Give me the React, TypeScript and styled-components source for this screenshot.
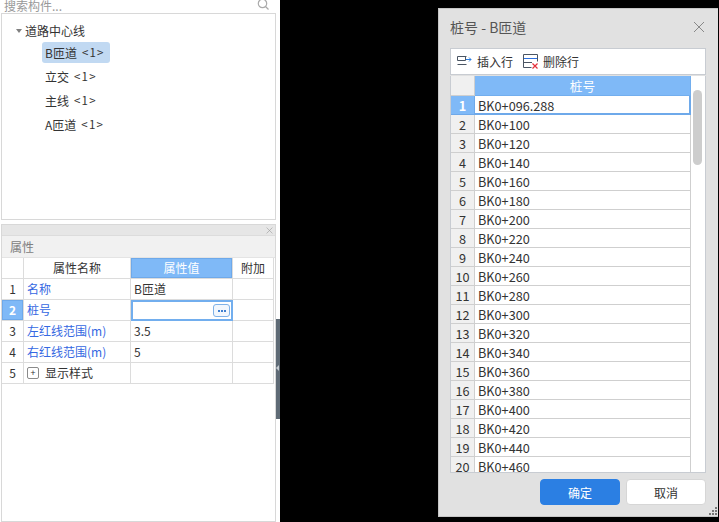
import React from 'react';
import styled, { createGlobalStyle } from 'styled-components';

const FONT = `"Noto Sans CJK SC", "Noto Sans", sans-serif`;

const GlobalStyle = createGlobalStyle`
  html, body {
    margin: 0;
    padding: 0;
    background: #000;
  }
`;

const Screen = styled.div`
  position: relative;
  width: 719px;
  height: 522px;
  overflow: hidden;
  background: #000;
  font-family: ${FONT};
  font-size: 12px;
  color: #333;
`;

const Sidebar = styled.aside`
  width: 280px;
  height: 522px;
  background: #fff;
  display: flex;
  flex-direction: column;
  box-sizing: border-box;
  padding: 0 4px 0 1px;
  position: relative;
`;

const SearchBar = styled.div`
  height: 13px;
  display: flex;
  justify-content: space-between;
  overflow: hidden;
  background: #fff;
  color: #999;
  padding: 0 7px 0 3px;
  box-sizing: border-box;

  span {
    line-height: 11px;
  }
`;

const TreePanel = styled.div`
  height: 207px;
  box-sizing: border-box;
  background: #fff;
  border: 1px solid #d8d8d8;
  padding: 4px 0 0 14px;
  display: flex;
  flex-direction: column;
  align-items: flex-start;
`;

const RootNode = styled.div`
  height: 24px;
  display: flex;
  align-items: center;
  gap: 3px;
  font-size: 12px;
`;

const Caret = styled.span`
  width: 0;
  height: 0;
  border-left: 3.5px solid transparent;
  border-right: 3.5px solid transparent;
  border-top: 4px solid #808080;
  margin-top: 1px;
`;

const Leaf = styled.div<{ $selected?: boolean }>`
  height: 21px;
  margin: 0 0 3px 26px;
  padding: 0 5px 1px 3px;
  box-sizing: border-box;
  display: flex;
  align-items: center;
  gap: 5px;
  border-radius: 3px;
  background: ${(p) => (p.$selected ? '#c1d9f2' : 'transparent')};
`;

const Count = styled.span`
  font-size: 11.5px;
  letter-spacing: 1.2px;
`;

const PropsPanel = styled.section`
  margin-top: 4px;
  flex: 1;
  background: #fff;
  border: 1px solid #d8d8d8;
  display: flex;
  flex-direction: column;
`;

const PanelStrip = styled.div`
  height: 10px;
  background: #e6e6e6;
  display: flex;
  justify-content: flex-end;
  align-items: center;
  padding-right: 2px;
`;

const PanelTitle = styled.div`
  height: 21px;
  background: #f1f1f1;
  border-top: 1px solid #dcdcdc;
  display: flex;
  align-items: center;
  padding-left: 8px;
  color: #808080;
`;

const PropGrid = styled.div`
  display: grid;
  grid-template-columns: 22px 107px 102px 41px;
  grid-auto-rows: 21px;
  width: 273px;
  box-sizing: border-box;
  border-top: 1px solid #e4e4e4;
`;

const Cell = styled.div<{ $head?: boolean; $active?: boolean; $blue?: boolean; $center?: boolean }>`
  box-sizing: border-box;
  display: flex;
  align-items: center;
  justify-content: ${(p) => (p.$head || p.$center ? 'center' : 'flex-start')};
  padding: ${(p) => (p.$head || p.$center ? '0 0 2px' : '0 3px 2px')};
  border-right: 1px solid #dcdcdc;
  border-bottom: 1px solid #dcdcdc;
  background: ${(p) => (p.$active ? '#7fb9f7' : '#fff')};
  color: ${(p) => (p.$active ? '#fff' : p.$blue ? '#3568e2' : '#333')};
  font-weight: ${(p) => (p.$active && !p.$head ? 700 : 400)};
  white-space: nowrap;
  overflow: hidden;
  ${(p) => (p.$active ? 'box-shadow: inset 0 0 0 1px #6ea9ea;' : '')}
`;

const EditCell = styled.div`
  box-sizing: border-box;
  border: 2px solid #72aeee;
  background: #fff;
  display: flex;
  align-items: center;
  justify-content: flex-end;
  padding-right: 1px;
`;

const MoreButton = styled.span`
  width: 17px;
  height: 13px;
  box-sizing: border-box;
  border: 1px solid #7fb2e8;
  border-radius: 3px;
  display: flex;
  align-items: center;
  justify-content: center;
  gap: 1px;
  background: #f2f7fd;

  i {
    width: 2px;
    height: 2px;
    background: #3f7fd0;
  }
`;

const PlusBox = styled.span`
  width: 12px;
  height: 12px;
  box-sizing: border-box;
  border: 1px solid #8a8a8a;
  border-radius: 2px;
  display: inline-flex;
  align-items: center;
  justify-content: center;
  font-size: 9px;
  line-height: 1;
  margin: 1px 6px 0 0;
`;

const Splitter = styled.div`
  position: absolute;
  left: 276px;
  top: 319px;
  width: 4px;
  height: 100px;
  background: #5f6b76;

  &::after {
    content: '';
    position: absolute;
    left: 0;
    top: 46px;
    border-right: 3px solid #c6ccd2;
    border-top: 3px solid transparent;
    border-bottom: 3px solid transparent;
  }
`;

const Dialog = styled.div`
  position: absolute;
  left: 438px;
  top: 8px;
  width: 280px;
  height: 509px;
  box-sizing: border-box;
  background: #e1e1e1;
  border: 1px solid #c6c6c6;
  border-right: 0;
  padding: 0 12px 0 11px;
  display: flex;
  flex-direction: column;
`;

const DialogHeader = styled.header`
  height: 39px;
  display: flex;
  align-items: center;
  justify-content: space-between;
  font-size: 14px;
  color: #555;
  padding: 0 1px 2px 0;
  box-sizing: border-box;
`;

const Toolbar = styled.div`
  height: 28px;
  box-sizing: border-box;
  background: #fff;
  border: 1px solid #c8ccd2;
  display: flex;
  align-items: center;
  padding-left: 5px;
`;

const ToolButton = styled.div`
  display: flex;
  align-items: center;
  gap: 5px;
  margin-right: 10px;
`;

const TableFrame = styled.div`
  position: relative;
  flex: 0 0 auto;
  height: 397px;
  margin-top: 1px;
  box-sizing: border-box;
  background: #fff;
  border: 1px solid #c8ccd2;
  border-top: 0;
  overflow: hidden;
`;

const StakeGrid = styled.div`
  display: grid;
  grid-template-columns: 24px 216px;
  grid-template-rows: 20px;
  grid-auto-rows: 19px;
`;

const StakeCell = styled.div<{ $head?: boolean; $active?: boolean; $index?: boolean }>`
  box-sizing: border-box;
  display: flex;
  align-items: center;
  justify-content: ${(p) => (p.$head || p.$index ? 'center' : 'flex-start')};
  padding-left: ${(p) => (p.$head || p.$index ? '0' : '3px')};
  font-size: 12.7px;
  border-right: 1px solid #cfcfcf;
  border-bottom: 1px solid #cfcfcf;
  background: ${(p) => (p.$head || (p.$index && p.$active) ? '#7fb9f7' : p.$index ? '#f0f0f0' : '#fff')};
  color: ${(p) => (p.$head || (p.$index && p.$active) ? '#fff' : '#333')};
  font-weight: ${(p) => (p.$index && p.$active ? 700 : 400)};
  ${(p) => (p.$head ? 'border-color: #72aeee;' : '')}
  ${(p) => (p.$active ? 'border-color: #6ea9ea;' : '')}
  ${(p) => (p.$active && !p.$index ? 'border-width: 0 2px 2px 0; padding-top: 1px;' : '')}
`;

const Corner = styled.div`
  background: #f0f0f0;
  border-right: 1px solid #cfcfcf;
  border-bottom: 1px solid #cfcfcf;
`;

const ScrollThumb = styled.div`
  position: absolute;
  right: 3px;
  top: 14px;
  width: 9px;
  height: 75px;
  border-radius: 4.5px;
  background: #cdcdcd;
`;

const ScrollEdge = styled.div`
  position: absolute;
  left: 239px;
  top: 39px;
  bottom: 0;
  width: 1px;
  background: #cfcfcf;
`;

const DialogFooter = styled.footer`
  height: 43px;
  display: flex;
  justify-content: flex-end;
  align-items: flex-start;
  gap: 6px;
  padding-top: 6px;
  box-sizing: border-box;
`;

const Button = styled.button<{ $primary?: boolean }>`
  width: 80px;
  height: 26px;
  border-radius: 4px;
  box-sizing: border-box;
  border: 1px solid ${(p) => (p.$primary ? '#2b7fe3' : '#d6d6d6')};
  background: ${(p) => (p.$primary ? '#2b7fe3' : '#fff')};
  color: ${(p) => (p.$primary ? '#fff' : '#333')};
  font-family: ${FONT};
  font-size: 12px;
  padding: 0;
`;

const Grip = styled.svg`
  position: absolute;
  right: 1px;
  bottom: 1px;
`;

const SearchGlyph = styled.svg`
  margin-top: -2px;
`;

const CloseIcon = ({ size, color }: { size: number; color: string }) => (
  <svg width={size} height={size} viewBox="0 0 12 12">
    <path d="M1 1l10 10M11 1L1 11" stroke={color} strokeWidth="1" fill="none" />
  </svg>
);

const SearchIcon = () => (
  <SearchGlyph width="12" height="12" viewBox="0 0 12 12">
    <circle cx="5.5" cy="5.5" r="4.2" stroke="#aaa" strokeWidth="1.2" fill="none" />
    <path d="M8.5 8.5l3 3" stroke="#aaa" strokeWidth="1.2" />
  </SearchGlyph>
);

const InsertIcon = () => (
  <svg width="16" height="14" viewBox="0 0 16 14">
    <path d="M1.5 2.5h9M1.5 2.5v4h8v-4M1.5 10.5h9" stroke="#4a5563" strokeWidth="1" fill="none" />
    <path d="M10 5.5h5M13 3.5l2 2-2 2" stroke="#2b7fe3" strokeWidth="1" fill="none" />
  </svg>
);

const DeleteIcon = () => (
  <svg width="15" height="15" viewBox="0 0 15 15">
    <path d="M.5 .5h14v7M.5 .5v13h8" stroke="#4a5563" strokeWidth="1" fill="none" />
    <path d="M1 4.5h13" stroke="#2b6fe0" strokeWidth="1" />
    <path d="M1 8.5h8" stroke="#4a5563" strokeWidth="1" />
    <path d="M9.5 9.5l5 5M14.5 9.5l-5 5" stroke="#e5303a" strokeWidth="1.2" />
  </svg>
);

const leaves = [
  { name: 'B匝道', selected: true },
  { name: '立交' },
  { name: '主线' },
  { name: 'A匝道' },
];

const stakes = [
  '096.288', '100', '120', '140', '160', '180', '200', '220', '240', '260',
  '280', '300', '320', '340', '360', '380', '400', '420', '440', '460',
];

const props = [
  { id: 1, name: '名称', value: 'B匝道' },
  { id: 2, name: '桩号', editing: true },
  { id: 3, name: '左红线范围(m)', value: '3.5' },
  { id: 4, name: '右红线范围(m)', value: '5' },
];

export default function App() {
  return (
    <Screen>
      <GlobalStyle />
      <Sidebar>
        <SearchBar>
          <span>搜索构件...</span>
          <SearchIcon />
        </SearchBar>
        <TreePanel>
          <RootNode>
            <Caret />
            道路中心线
          </RootNode>
          {leaves.map((leaf) => (
            <Leaf key={leaf.name} $selected={leaf.selected}>
              <span>{leaf.name}</span>
              <Count>{'<1>'}</Count>
            </Leaf>
          ))}
        </TreePanel>
        <PropsPanel>
          <PanelStrip>
            <CloseIcon size={7} color="#999" />
          </PanelStrip>
          <PanelTitle>属性</PanelTitle>
          <PropGrid>
            <Cell $head />
            <Cell $head>属性名称</Cell>
            <Cell $head $active>属性值</Cell>
            <Cell $head>附加</Cell>
            {props.map((row) => (
              <React.Fragment key={row.id}>
                <Cell $center $active={row.editing}>{row.id}</Cell>
                <Cell $blue>{row.name}</Cell>
                {row.editing ? (
                  <EditCell>
                    <MoreButton><i /><i /><i /></MoreButton>
                  </EditCell>
                ) : (
                  <Cell>{row.value}</Cell>
                )}
                <Cell />
              </React.Fragment>
            ))}
            <Cell $center>5</Cell>
            <Cell><PlusBox>+</PlusBox>显示样式</Cell>
            <Cell />
            <Cell />
          </PropGrid>
        </PropsPanel>
        <Splitter />
      </Sidebar>
      <Dialog>
        <DialogHeader>
          <span>桩号 - B匝道</span>
          <CloseIcon size={12} color="#888" />
        </DialogHeader>
        <Toolbar>
          <ToolButton><InsertIcon />插入行</ToolButton>
          <ToolButton><DeleteIcon />删除行</ToolButton>
        </Toolbar>
        <TableFrame>
          <StakeGrid>
            <Corner />
            <StakeCell $head>桩号</StakeCell>
            {stakes.map((s, i) => (
              <React.Fragment key={s}>
                <StakeCell $index $active={i === 0}>{i + 1}</StakeCell>
                <StakeCell $active={i === 0}>BK0+{s}</StakeCell>
              </React.Fragment>
            ))}
          </StakeGrid>
          <ScrollEdge />
          <ScrollThumb />
        </TableFrame>
        <DialogFooter>
          <Button $primary>确定</Button>
          <Button>取消</Button>
        </DialogFooter>
        <Grip width="8" height="8" viewBox="0 0 8 8">
          <path d="M6 0h2v2H6zM3 3h2v2H3zM6 3h2v2H6zM0 6h2v2H0zM3 6h2v2H3zM6 6h2v2H6z" fill="#777" />
        </Grip>
      </Dialog>
    </Screen>
  );
}
